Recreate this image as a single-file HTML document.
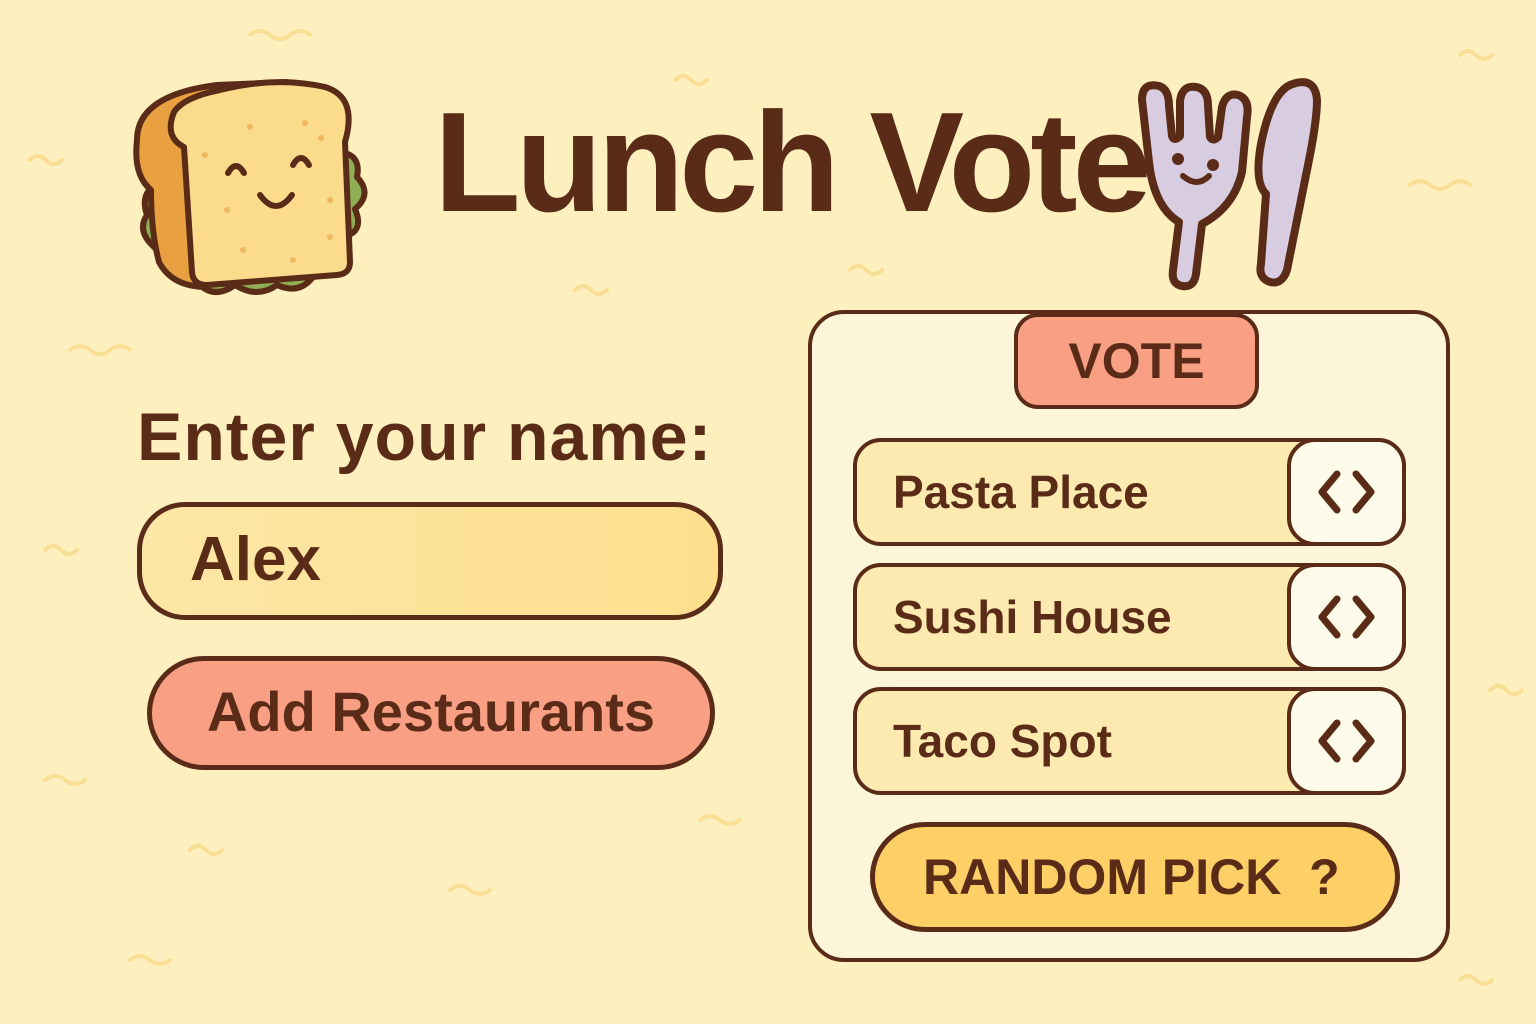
<!DOCTYPE html>
<html><head><meta charset="utf-8"><style>
body{margin:0;width:1536px;height:1024px;background:#fdefbe;overflow:hidden;position:relative;font-family:"Liberation Sans","DejaVu Sans",sans-serif;color:#5a2c18;font-weight:bold}
.a{position:absolute;box-sizing:border-box}
.title{left:434px;top:92px;font-size:142px;letter-spacing:-5px;line-height:1}
.label{left:137px;top:398px;font-size:68px;letter-spacing:1px}
.input{left:137px;top:502px;width:586px;height:118px;border:5px solid #5a2c18;border-radius:48px;background:linear-gradient(90deg,#fde7a6,#fddf8e);font-size:62px;padding-left:48px;line-height:106px}
.btn{left:147px;top:656px;width:568px;height:114px;border:5px solid #5a2c18;border-radius:57px;background:#f99f84;font-size:56px;text-align:center;line-height:102px}
.panel{left:808px;top:310px;width:642px;height:652px;border:4px solid #5a2c18;border-radius:36px;background:#fdf5d9}
.tab{left:1014px;top:313px;width:245px;height:96px;border:4px solid #5a2c18;border-radius:24px;background:#f99f84;font-size:50px;text-align:center;line-height:88px}
.row{left:853px;width:553px;height:108px;border:4px solid #5a2c18;border-radius:28px;background:#fdeab0;font-size:46px;padding-left:36px;line-height:100px}
.arr{position:absolute;right:-4px;top:-4px;width:119px;height:108px;border:4px solid #5a2c18;border-radius:28px;background:#fffbea;box-sizing:border-box}
.rp{left:870px;top:822px;width:530px;height:110px;border:5px solid #5a2c18;border-radius:55px;background:#fcd066;font-size:50px;line-height:100px;padding-left:48px}
</style></head><body>
<svg class="a" style="left:0;top:0" width="1536" height="1024" fill="none" stroke="#f8df95" stroke-width="4" stroke-linecap="round">
<path d="M250 35q10-8 20 0t20 0t20 0"/><path d="M30 160q8-8 16 0t16 0"/><path d="M70 350q10-8 20 0t20 0t20 0"/><path d="M1410 185q10-8 20 0t20 0t20 0"/><path d="M1460 55q8-8 16 0t16 0"/><path d="M45 780q10-8 20 0t20 0"/><path d="M130 960q10-8 20 0t20 0"/><path d="M700 820q10-8 20 0t20 0"/><path d="M450 890q10-8 20 0t20 0"/><path d="M575 290q8-8 16 0t16 0"/><path d="M850 270q8-8 16 0t16 0"/><path d="M675 80q8-8 16 0t16 0"/><path d="M1490 690q8-8 16 0t16 0"/><path d="M1460 980q8-8 16 0t16 0"/><path d="M190 850q8-8 16 0t16 0"/><path d="M45 550q8-8 16 0t16 0"/>
</svg>
<!-- sandwich -->
<svg class="a" style="left:125px;top:75px" width="260" height="225" viewBox="0 0 260 225">
<g stroke="#5a2c18" stroke-width="6" stroke-linejoin="round">
<path d="M30 110q-15 10-8 30q-10 15 5 30l20 20q5 18 28 20q15 14 35 0q22 14 42 0q22 10 36-8q15-5 25-20l5-20q22-5 12-28q18-15 2-32q5-25-22-25z" fill="#8fae55"/>
<path d="M40 170q5 22 40 30l15-12z" fill="#e07a5a"/>
<path d="M12 65q0-45 80-55l70-3l-95 35l15 170q-35 0-48-25q-8-30-8-72q-18-15-14-50z" fill="#e9a040"/>
<path d="M95 15q55-14 105-3q33 10 20 55l5 120q0 12-13 13l-130 10q-14 0-15-13l-8-125q-20-10-10-35q10-15 46-22z" fill="#fbdc8c"/>
</g>
<g stroke="#5a2c18" stroke-width="6" stroke-linecap="round" fill="none">
<path d="M103 98q8-14 16 0"/><path d="M168 90q8-14 16 0"/><path d="M135 120q16 22 32 0"/>
</g>
<g fill="#f0b860"><circle cx="125" cy="52" r="3"/><circle cx="180" cy="48" r="3"/><circle cx="196" cy="63" r="3"/><circle cx="80" cy="80" r="3"/><circle cx="205" cy="125" r="3"/><circle cx="102" cy="135" r="3"/><circle cx="205" cy="162" r="3"/><circle cx="118" cy="175" r="3"/><circle cx="168" cy="185" r="3"/></g>
</svg>
<div class="a title">Lunch Vote</div>
<!-- fork & knife -->
<svg class="a" style="left:1130px;top:70px" width="200" height="230" viewBox="0 0 200 230">
<g stroke="#5a2c18" stroke-width="8" stroke-linejoin="round" fill="#d8cce0">
<path d="M12 30q0-18 17-14q10 3 10 20l3 30q2 6 8 0l0-35q2-16 16-14q12 2 12 18l2 32q3 5 8 0l4-30q4-15 16-12q12 4 9 22l-5 55q-8 35-40 52l-6 50q-2 14-14 12q-11-2-9-16l6-48q-25-15-30-60z"/>
<path d="M160 15q25-10 27 15q0 20-8 60l-22 110q-5 15-17 12q-12-4-9-18l5-70q-12-12-5-50q10-50 29-59z"/>
</g>
<g fill="#5a2c18"><circle cx="48" cy="89" r="6"/><circle cx="83" cy="95" r="6"/></g>
<path d="M53 106q14 12 26 0" stroke="#5a2c18" stroke-width="6" fill="none" stroke-linecap="round"/>
</svg>
<div class="a label">Enter your name:</div>
<div class="a input">Alex</div>
<div class="a btn">Add Restaurants</div>
<div class="a panel"></div>
<div class="a tab">VOTE</div>
<div class="a row" style="top:438px">Pasta Place<div class="arr"><svg width="111" height="100"><path d="M46 32l-15 18l15 18M65 32l15 18l-15 18" stroke="#5a2c18" stroke-width="7" fill="none" stroke-linecap="round" stroke-linejoin="round"/></svg></div></div>
<div class="a row" style="top:563px">Sushi House<div class="arr"><svg width="111" height="100"><path d="M46 32l-15 18l15 18M65 32l15 18l-15 18" stroke="#5a2c18" stroke-width="7" fill="none" stroke-linecap="round" stroke-linejoin="round"/></svg></div></div>
<div class="a row" style="top:687px">Taco Spot<div class="arr"><svg width="111" height="100"><path d="M46 32l-15 18l15 18M65 32l15 18l-15 18" stroke="#5a2c18" stroke-width="7" fill="none" stroke-linecap="round" stroke-linejoin="round"/></svg></div></div>
<div class="a rp">RANDOM PICK &nbsp;?</div>
</body></html>
